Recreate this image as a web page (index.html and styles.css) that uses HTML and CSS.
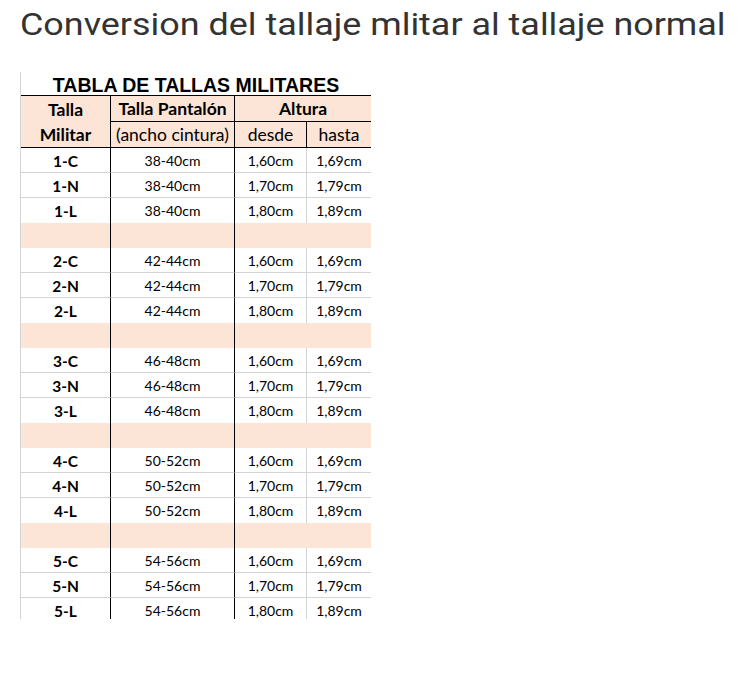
FILE: index.html
```html
<!DOCTYPE html>
<html lang="es">
<head>
<meta charset="utf-8">
<title>Tallaje militar</title>
<link rel="stylesheet" href="styles.css">
</head>
<body>
<h1 class="page-title">Conversion del tallaje mlitar al tallaje normal</h1>
<div class="sheet">
<table class="sizes">
<colgroup><col class="c1"><col class="c2"><col class="c3"><col class="c4"></colgroup>
<thead>
<tr class="caption-row"><th colspan="4" class="caption">TABLA DE TALLAS MILITARES</th></tr>
<tr class="head"><th class="v1">Talla</th><th class="v2 hb">Talla Pantalón</th><th colspan="2" class="hb">Altura</th></tr>
<tr class="head"><th class="v1 hb">Militar</th><th class="v2 hb reg">(ancho cintura)</th><th class="v3h hb reg">desde</th><th class="hb reg">hasta</th></tr>
</thead>
<tbody>
<tr class="row"><td class="v1 key g">1-C</td><td class="v2 g">38-40cm</td><td class="v3 g">1,60cm</td><td class="g">1,69cm</td></tr>
<tr class="row"><td class="v1 key g">1-N</td><td class="v2 g">38-40cm</td><td class="v3 g">1,70cm</td><td class="g">1,79cm</td></tr>
<tr class="row"><td class="v1 key">1-L</td><td class="v2">38-40cm</td><td class="v3">1,80cm</td><td>1,89cm</td></tr>
<tr class="gap"><td class="v1"></td><td class="v2"></td><td></td><td></td></tr>
<tr class="row"><td class="v1 key g">2-C</td><td class="v2 g">42-44cm</td><td class="v3 g">1,60cm</td><td class="g">1,69cm</td></tr>
<tr class="row"><td class="v1 key g">2-N</td><td class="v2 g">42-44cm</td><td class="v3 g">1,70cm</td><td class="g">1,79cm</td></tr>
<tr class="row"><td class="v1 key">2-L</td><td class="v2">42-44cm</td><td class="v3">1,80cm</td><td>1,89cm</td></tr>
<tr class="gap"><td class="v1"></td><td class="v2"></td><td></td><td></td></tr>
<tr class="row"><td class="v1 key g">3-C</td><td class="v2 g">46-48cm</td><td class="v3 g">1,60cm</td><td class="g">1,69cm</td></tr>
<tr class="row"><td class="v1 key g">3-N</td><td class="v2 g">46-48cm</td><td class="v3 g">1,70cm</td><td class="g">1,79cm</td></tr>
<tr class="row"><td class="v1 key">3-L</td><td class="v2">46-48cm</td><td class="v3">1,80cm</td><td>1,89cm</td></tr>
<tr class="gap"><td class="v1"></td><td class="v2"></td><td></td><td></td></tr>
<tr class="row"><td class="v1 key g">4-C</td><td class="v2 g">50-52cm</td><td class="v3 g">1,60cm</td><td class="g">1,69cm</td></tr>
<tr class="row"><td class="v1 key g">4-N</td><td class="v2 g">50-52cm</td><td class="v3 g">1,70cm</td><td class="g">1,79cm</td></tr>
<tr class="row"><td class="v1 key">4-L</td><td class="v2">50-52cm</td><td class="v3">1,80cm</td><td>1,89cm</td></tr>
<tr class="gap"><td class="v1"></td><td class="v2"></td><td></td><td></td></tr>
<tr class="row"><td class="v1 key g">5-C</td><td class="v2 g">54-56cm</td><td class="v3 g">1,60cm</td><td class="g">1,69cm</td></tr>
<tr class="row"><td class="v1 key g">5-N</td><td class="v2 g">54-56cm</td><td class="v3 g">1,70cm</td><td class="g">1,79cm</td></tr>
<tr class="row"><td class="v1 key">5-L</td><td class="v2">54-56cm</td><td class="v3">1,80cm</td><td>1,89cm</td></tr>
</tbody>
</table>
</div>
</body>
</html>
```

FILE: styles.css
```css
html, body {
  margin: 0;
  padding: 0;
  background: #ffffff;
}

.page-title {
  width: max-content;
  margin: 7px 0 0 20px;
  font-family: Roboto, "Liberation Sans", sans-serif;
  font-weight: 400;
  font-size: 31px;
  line-height: 36px;
  color: #333333;
  white-space: nowrap;
  transform: scaleX(1.158);
  transform-origin: left center;
}

.sheet {
  margin: 29px 0 0 20px;
  width: 351px;
  height: 547px;
  overflow: hidden;
}

.sizes {
  table-layout: fixed;
  width: 351px;
  border-collapse: separate;
  border-spacing: 0;
  border-left: 1px solid #d4d4d4;
  font-family: Lato, "Open Sans", sans-serif;
  color: #000000;
}

.c1 { width: 90px; }
.c2 { width: 124px; }
.c3 { width: 72px; }
.c4 { width: 64px; }

.sizes th,
.sizes td {
  padding: 0;
  text-align: center;
  box-sizing: border-box;
  white-space: nowrap;
}

.caption-row { height: 24px; }

.caption {
  font-family: "Liberation Sans", Arial, sans-serif;
  font-weight: 700;
  font-size: 19.5px;
  line-height: 19px;
  vertical-align: bottom;
  padding-bottom: 2px;
  border-bottom: 1px solid #000000;
  background: #ffffff;
}

.head { height: 26px; }

.head th {
  background: #fce4d6;
  font-weight: 700;
  font-size: 17.5px;
  line-height: 20px;
  vertical-align: middle;
  padding-top: 1px;
}

.head th.reg { font-weight: 400; }

.hb { border-bottom: 1px solid #000000; }

.v1 { border-right: 1px solid #000000; }
.v2 { border-right: 1px solid #000000; }
.v3 { border-right: 1px solid #d4d4d4; }
.v3h { border-right: 1px solid #000000; }

.row { height: 25px; }

.row td {
  font-size: 14px;
  line-height: 16px;
  vertical-align: middle;
  padding-top: 1px;
}

.row td.key {
  font-weight: 700;
  font-size: 15.5px;
}

.g { border-bottom: 1px solid #d4d4d4; }

.gap { height: 25px; }

.gap td { background: #fce4d6; }
```
